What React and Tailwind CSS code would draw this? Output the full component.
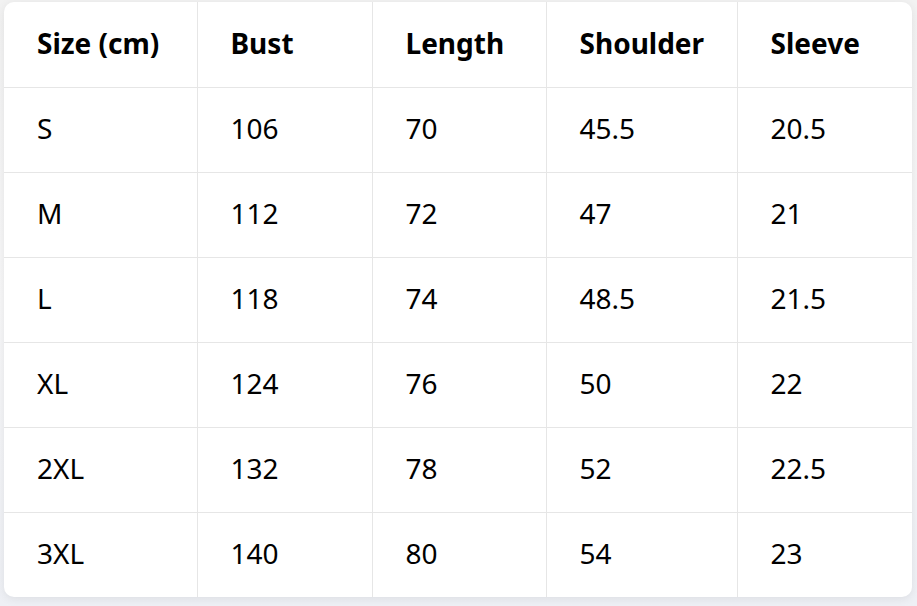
const headers = ["Size (cm)", "Bust", "Length", "Shoulder", "Sleeve"]

const rows = [
  ["S", "106", "70", "45.5", "20.5"],
  ["M", "112", "72", "47", "21"],
  ["L", "118", "74", "48.5", "21.5"],
  ["XL", "124", "76", "50", "22"],
  ["2XL", "132", "78", "52", "22.5"],
  ["3XL", "140", "80", "54", "23"],
]

const widths = ["w-[193px]", "w-[175px]", "w-[174px]", "w-[191px]", "w-[175px]"]

const App = () => {
  return (
    <div className="w-[917px] h-[606px] bg-gradient-to-b from-[#f2f2f2] via-[#f7f7f8] to-[#eef0f5] pt-[2px] pl-[4px] overflow-hidden" style={{ fontFamily: '"Noto Sans", "Open Sans", sans-serif' }}>
      <div className="w-[908px] bg-white rounded-[10px] shadow-[0_2px_10px_rgba(0,0,0,0.08)] overflow-hidden">
        <table className="w-full border-collapse table-fixed text-black">
          <thead>
            <tr className="h-[85px]">
              {headers.map((h, i) => (
                <th key={h} className={`${widths[i]} text-left align-middle font-bold text-[28px] pl-[33px] pb-[2px] border-[#e6e6e6] ${i > 0 ? "border-l" : ""}`}>
                  {h}
                </th>
              ))}
            </tr>
          </thead>
          <tbody>
            {rows.map((r) => (
              <tr key={r[0]} className="h-[85px] border-t border-[#e6e6e6]">
                {r.map((c, i) => (
                  <td key={i} className={`text-left align-middle text-[28px] pl-[33px] pb-[3px] border-[#e6e6e6] ${i > 0 ? "border-l" : ""}`}>
                    {c}
                  </td>
                ))}
              </tr>
            ))}
          </tbody>
        </table>
      </div>
    </div>
  )
}

export default App
